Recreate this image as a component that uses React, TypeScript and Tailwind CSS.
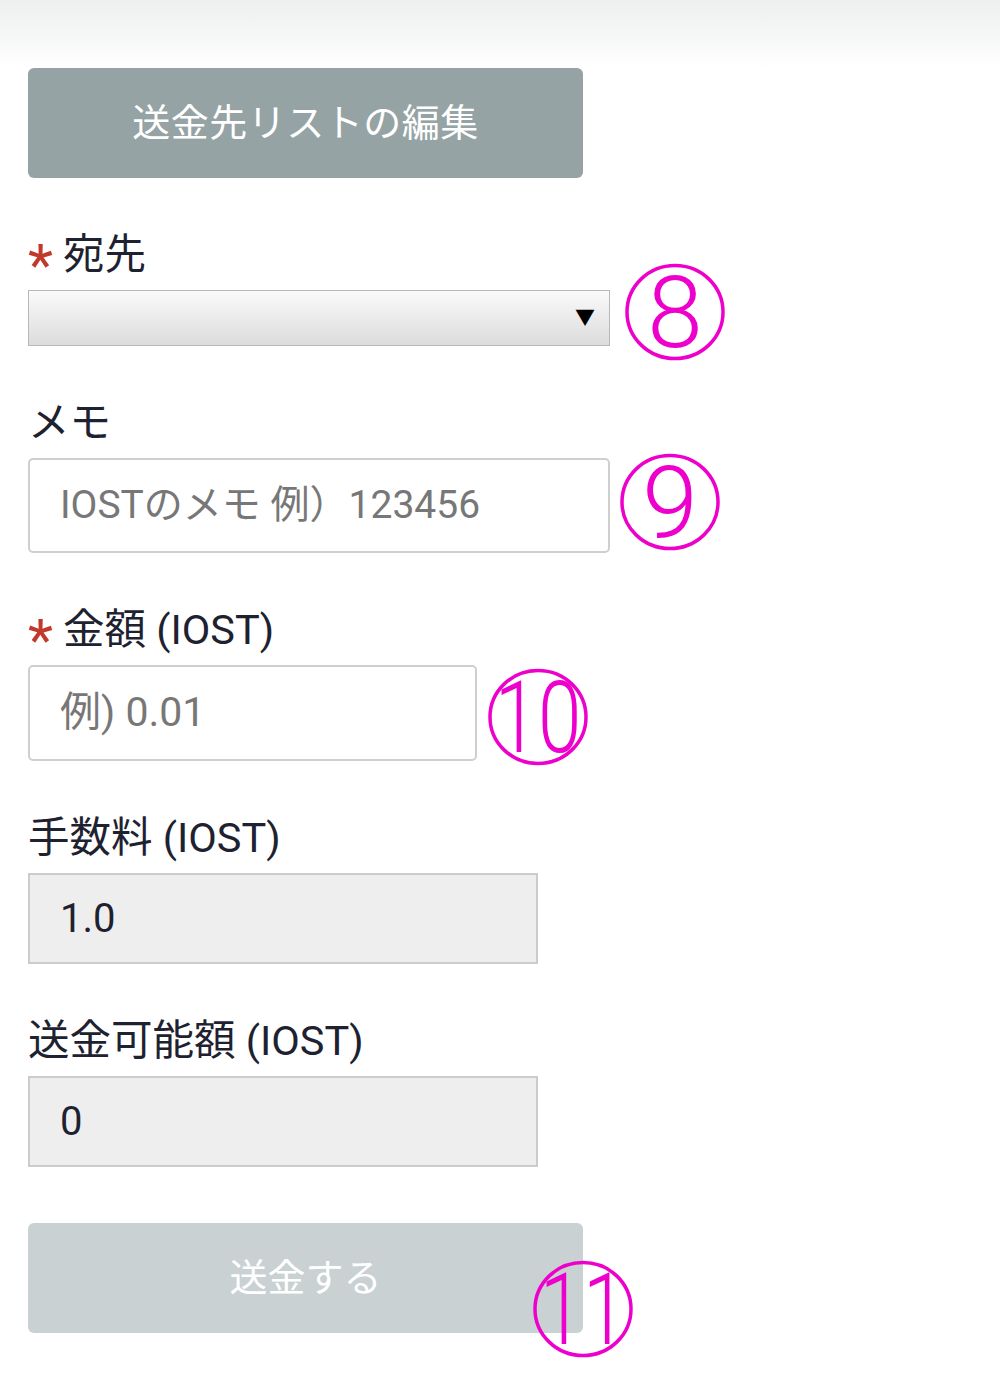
import React from "react";

const FONT = "font-['Roboto','Noto_Sans_CJK_JP',sans-serif]";

function Mark({ n, condensed = false }: { n: string; condensed?: boolean }) {
  return (
    <svg width="102" height="98" viewBox="0 0 102 98" className="block overflow-visible">
      <ellipse cx="51" cy="49" rx="48" ry="46.5" fill="none" stroke="#ee00cc" strokeWidth="3.5" />
      <text
        x="51"
        y="84"
        textAnchor="middle"
        fill="#ee00cc"
        fontSize="100"
        fontWeight="300"
        fontFamily="Roboto, 'Liberation Sans', sans-serif"
        transform={condensed ? "translate(51 0) scale(0.78 1) translate(-51 0)" : undefined}
      >
        {n}
      </text>
    </svg>
  );
}

function Label({ text, required = false }: { text: string; required?: boolean }) {
  return (
    <div className="flex items-center text-[41.5px] leading-[48px] text-[#1e2230] mb-[11px]">
      {required && (
        <span className="relative top-[10px] text-[#c0392b] mr-[10px] text-[58px] leading-[48px]">*</span>
      )}
      <span>{text}</span>
    </div>
  );
}

export default function App() {
  return (
    <div className={`${FONT} bg-white w-[1000px] min-h-[1377px]`}>
      <div className="h-[68px] bg-gradient-to-b from-[#eef0f0] via-[#f5f6f6] to-white" />
      <div className="pl-[28px]">
        <button className="w-[555px] h-[110px] rounded-[6px] bg-[#95a3a4] text-white text-[38px] tracking-[0.5px] flex items-center justify-center">
          送金先リストの編集
        </button>

        <div className="mt-[53px]">
          <Label text="宛先" required />
          <div className="relative w-fit">
            <div className="w-[582px] h-[56px] border border-[#b8b8b8] bg-gradient-to-b from-[#fafafa] to-[#dcdcdc] flex items-center justify-end pr-[14px]">
              <span className="text-[20px] text-black leading-none">▼</span>
            </div>
            <div className="absolute left-[596px] top-[-27px]">
              <Mark n="8" />
            </div>
          </div>
        </div>

        <div className="mt-[53px]">
          <Label text="メモ" />
          <div className="relative w-fit">
            <div className="w-[582px] h-[95px] border-2 border-[#cfcfcf] rounded-[5px] flex items-center pl-[30px] text-[39px] text-[#777777]">
              IOSTのメモ 例）123456
            </div>
            <div className="absolute left-[591px] top-[-5px]">
              <Mark n="9" />
            </div>
          </div>
        </div>

        <div className="mt-[53px]">
          <Label text="金額 (IOST)" required />
          <div className="relative w-fit">
            <div className="w-[449px] h-[96px] border-2 border-[#cfcfcf] rounded-[5px] flex items-center pl-[30px] text-[41px] text-[#777777]">
              例) 0.01
            </div>
            <div className="absolute left-[459px] top-[3px]">
              <Mark n="10" condensed />
            </div>
          </div>
        </div>

        <div className="mt-[53px]">
          <Label text="手数料 (IOST)" />
          <div className="w-[510px] h-[91px] border-2 border-[#cccccc] bg-[#eeeeee] flex items-center pl-[30px] text-[40px] text-[#1e2230]">
            1.0
          </div>
        </div>

        <div className="mt-[53px]">
          <Label text="送金可能額 (IOST)" />
          <div className="w-[510px] h-[91px] border-2 border-[#cccccc] bg-[#eeeeee] flex items-center pl-[30px] text-[40px] text-[#1e2230]">
            0
          </div>
        </div>

        <div className="relative mt-[56px] w-[555px]">
          <button className="w-[555px] h-[110px] rounded-[6px] bg-[#c9d1d3] text-white text-[38px] flex items-center justify-center">
            送金する
          </button>
          <div className="absolute left-[504px] top-[37px]">
            <Mark n="11" condensed />
          </div>
        </div>
      </div>
    </div>
  );
}
